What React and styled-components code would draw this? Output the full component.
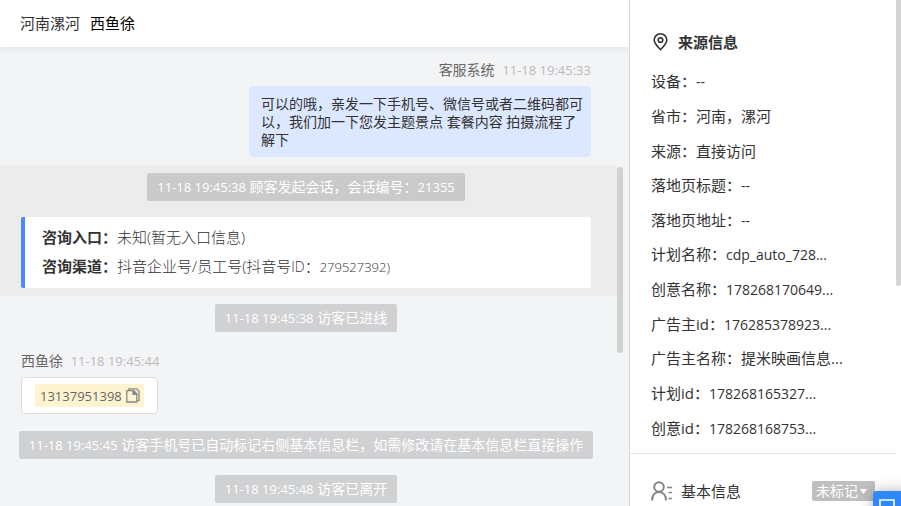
import React from 'react'
import styled, { createGlobalStyle } from 'styled-components'

const sourceInfo = [
    { label: '设备', value: '--', latin: true },
    { label: '省市', value: '河南，漯河' },
    { label: '来源', value: '直接访问' },
    { label: '落地页标题', value: '--', latin: true },
    { label: '落地页地址', value: '--', latin: true },
    { label: '计划名称', value: 'cdp_auto_728...', latin: true },
    { label: '创意名称', value: '178268170649...', latin: true },
    { label: '广告主id', value: '176285378923...', latin: true },
    { label: '广告主名称', value: '提米映画信息...' },
    { label: '计划id', value: '178268165327...', latin: true },
    { label: '创意id', value: '178268168753...', latin: true },
]

function Notice({ time, children }) {
    return (
        <NoticeRow>
            <NoticePill><Small>{time}</Small> {children}</NoticePill>
        </NoticeRow>
    )
}

function PinIcon() {
    return (
        <svg width="15" height="18" viewBox="0 0 15 18" fill="none" stroke="#333" strokeWidth="1.6">
            <path d="M7.5 16.6C4.6 13.7 1.2 10.6 1.2 7a6.3 6.2 0 0 1 12.6 0c0 3.600-3.400 6.700-6.300 9.600z" />
            <circle cx="7.5" cy="7" r="2.3" />
        </svg>
    )
}

function UserIcon() {
    return (
        <svg width="22" height="20" viewBox="0 0 22 20" fill="none" stroke="#858585" strokeWidth="2">
            <circle cx="8" cy="6" r="4.8" />
            <path d="M1 19.500c0-5.200 2.600-8.500 7-8.500s7 3.300 7 8.500" />
            <path d="M16 6.500h5M17.500 11.500h3.500M17.500 17.500h3.500" strokeWidth="1.6" />
        </svg>
    )
}

function CopyIcon() {
    return (
        <svg width="14" height="15" viewBox="0 0 14 15" fill="none" stroke="#888" strokeWidth="1.3">
            <path d="M.8 2.700h7l3 3v8.300H.8z" />
            <path d="M2.800 2.600V.8h8l2.200 2.400v9.500h-2.200" />
            <path d="M7 3l3.600 3.400H7z" fill="#888" />
        </svg>
    )
}

function App() {
    return (
        <AppStyled>
            <GlobalStyle />
            <Chat>
                <ChatHeader>
                    <span>河南漯河</span>
                    <strong>西鱼徐</strong>
                </ChatHeader>
                <ChatBody>
                    <Messages>
                        <Message $mine>
                            <Meta>客服系统 <time>11-18 19:45:33</time></Meta>
                            <Bubble>可以的哦，亲发一下手机号、微信号或者二维码都可以，我们加一下您发主题景点 套餐内容 拍摄流程了解下</Bubble>
                        </Message>
                        <Session>
                            <Notice time="11-18 19:45:38">顾客发起会话，会话编号：<Small>21355</Small></Notice>
                            <EntryCard>
                                <p><b>咨询入口：</b>未知(暂无入口信息)</p>
                                <p><b>咨询渠道：</b>抖音企业号/员工号(抖音号<Latin>ID</Latin>：<Small>279527392)</Small></p>
                            </EntryCard>
                        </Session>
                        <Notice time="11-18 19:45:38">访客已进线</Notice>
                        <Message>
                            <Meta>西鱼徐 <time>11-18 19:45:44</time></Meta>
                            <PhoneBubble>
                                <Phone type="button">
                                    13137951398
                                    <CopyIcon />
                                </Phone>
                            </PhoneBubble>
                        </Message>
                        <Notice time="11-18 19:45:45">访客手机号已自动标记右侧基本信息栏，如需修改请在基本信息栏直接操作</Notice>
                        <Notice time="11-18 19:45:48">访客已离开</Notice>
                    </Messages>
                    <ChatTrack><ChatThumb /></ChatTrack>
                </ChatBody>
            </Chat>
            <Side>
                <SideContent>
                    <SourceSection>
                        <SourceTitle><PinIcon />来源信息</SourceTitle>
                        <InfoList>
                            {sourceInfo.map(({ label, value, latin }) => (
                                <li key={label}>{label}：{latin ? <Latin>{value}</Latin> : value}</li>
                            ))}
                        </InfoList>
                    </SourceSection>
                    <BasicSection>
                        <UserIcon />
                        <h2>基本信息</h2>
                        <MarkSelect>
                            <select aria-label="基本信息" defaultValue="未标记">
                                <option>未标记</option>
                            </select>
                            <svg width="7" height="5" viewBox="0 0 7 5" fill="#fff"><path d="M0 0h7L3.5 5z" /></svg>
                        </MarkSelect>
                    </BasicSection>
                </SideContent>
                <SideTrack><SideThumb /></SideTrack>
            </Side>
            <FloatButton type="button">
                <svg width="18" height="18" viewBox="0 0 18 18" fill="none" stroke="#fff" strokeWidth="1.6">
                    <path d="M1 1h14v12H1z" />
                </svg>
            </FloatButton>
        </AppStyled>
    )
}

const GlobalStyle = createGlobalStyle`
    * {
        box-sizing: border-box;
        margin: 0;
        padding: 0;
    }
    body {
        overflow: hidden;
        color: #333;
        font-family: "Open Sans", "Noto Sans CJK SC", sans-serif;
        font-size: 15px;
    }
    button, select {
        font: inherit;
        color: inherit;
        border: 0;
    }
`;

const AppStyled = styled.div`
    display: flex;
    height: 100vh;
    overflow: hidden;
`;

const Small = styled.span`
    font-size: 13px;
    line-height: 1;
`;

const Latin = styled.span`
    font-size: 14px;
    line-height: 1;
`;

const Chat = styled.main`
    flex: 1;
    min-width: 0;
    display: flex;
    flex-direction: column;
    overflow: hidden;
    background: #f3f4f6;
`;

const ChatHeader = styled.header`
    position: relative;
    flex: none;
    display: flex;
    align-items: center;
    gap: 10px;
    height: 47px;
    padding: 0 20px 2px;
    background: #fff;
    box-shadow: 0 1px 8px rgba(0, 0, 0, 0.08);
    strong {
        font-weight: 400;
        color: #000;
    }
`;

const ChatBody = styled.div`
    flex: 1;
    min-height: 0;
    display: flex;
`;

const Messages = styled.div`
    flex: 1;
    min-width: 0;
    padding-top: 13px;
    font-size: 14px;
    overflow: hidden;
`;

const Message = styled.section`
    display: flex;
    flex-direction: column;
    align-items: ${({ $mine }) => $mine ? 'flex-end' : 'flex-start'};
    gap: 6px;
    padding: 0 26px 0 21px;
    margin: ${({ $mine }) => $mine ? '0 0 8px' : '11px 0 9px'};
`;

const Meta = styled.div`
    line-height: 20px;
    color: #666;
    time {
        margin-left: 4px;
        font-size: 13px;
        color: #bbb;
    }
`;

const Bubble = styled.p`
    width: 342px;
    padding: 9px 8px 8px 12px;
    line-height: 18px;
    background: #dce8ff;
    border-radius: 4px;
`;

const Session = styled.section`
    padding-bottom: 8px;
    background: #ececec;
`;

const NoticeRow = styled.div`
    display: flex;
    justify-content: center;
    padding: 8px 26px 8px 21px;
`;

const NoticePill = styled.p`
    flex: none;
    padding: 0 10px;
    line-height: 28px;
    color: #fff;
    background: rgba(0, 0, 0, 0.14);
    border-radius: 2px;
`;

const EntryCard = styled.div`
    margin: 8px 26px 0 21px;
    padding: 6px 17px 7px;
    font-size: 15px;
    font-weight: 300;
    line-height: 29px;
    background: #fff;
    border-left: 4px solid #4a8cff;
    border-radius: 2px;
    b {
        font-weight: 700;
    }
`;

const PhoneBubble = styled.div`
    padding: 6px 13px;
    background: #fff;
    border: 1px solid #ddd;
    border-radius: 4px;
`;

const Phone = styled.button`
    display: flex;
    align-items: center;
    gap: 4px;
    height: 23px;
    padding: 0 4px 0 5px;
    font-size: 13px;
    color: #666;
    background: #fff4d1;
`;

const ChatTrack = styled.div`
    flex: none;
    width: 12px;
`;

const ChatThumb = styled.div`
    width: 6px;
    height: 186px;
    margin-top: 120px;
    background: #d0d1d1;
    border-radius: 3px;
`;

const Side = styled.aside`
    flex: none;
    display: flex;
    width: 272px;
    background: #fff;
    border-left: 1px solid #d5d5d5;
`;

const SideContent = styled.div`
    flex: 1;
    min-width: 0;
`;

const SourceSection = styled.section`
    display: flex;
    flex-direction: column;
    min-height: 454px;
    padding: 32px 21px 8px;
    border-bottom: 1px solid #e5e5e5;
`;

const SourceTitle = styled.h2`
    display: flex;
    align-items: center;
    gap: 10px;
    padding-left: 2px;
    margin-bottom: 12px;
    font-size: 15px;
    line-height: 20px;
`;

const InfoList = styled.ul`
    flex: 1;
    display: grid;
    grid-auto-rows: 1fr;
    align-items: center;
    list-style: none;
    line-height: 20px;
    white-space: nowrap;
`;

const BasicSection = styled.section`
    display: flex;
    align-items: center;
    padding: 24px 21px;
    h2 {
        flex: 1;
        margin-left: 8px;
        font-size: 15px;
        font-weight: 400;
        line-height: 26px;
    }
`;

const MarkSelect = styled.label`
    display: flex;
    align-items: center;
    gap: 2px;
    height: 20px;
    padding: 0 8px 0 4px;
    color: #fff;
    background: #bfbfbf;
    border-radius: 2px;
    select {
        appearance: none;
        font-size: 14px;
        line-height: 20px;
        background: transparent;
    }
`;

const SideTrack = styled.div`
    flex: none;
    width: 5px;
`;

const SideThumb = styled.div`
    height: 286px;
    background: #d5d5d5;
    border-radius: 0 0 3px 3px;
`;

const FloatButton = styled.button`
    position: fixed;
    right: -12px;
    bottom: -25px;
    display: flex;
    align-items: flex-start;
    width: 40px;
    height: 40px;
    padding: 8px 6px;
    background: #2f88ff;
    border-radius: 4px;
    box-shadow: 0 0 14px rgba(0, 0, 0, 0.3);
`;

export default App
